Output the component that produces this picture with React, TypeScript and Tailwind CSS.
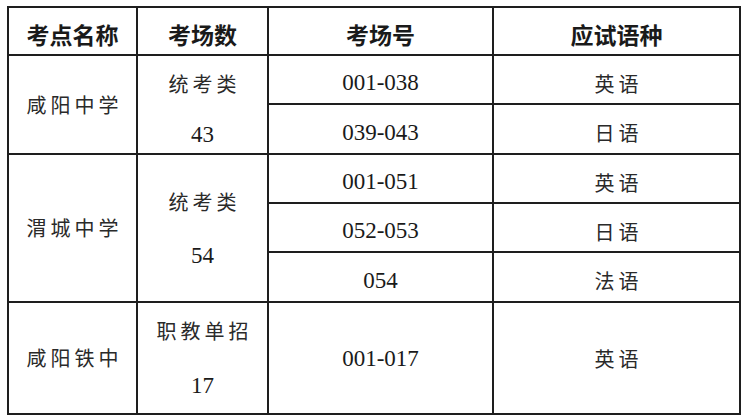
const cjk = "font-['Noto_Sans_CJK_SC',sans-serif]";
const num = "font-['Liberation_Serif','Noto_Sans_CJK_SC',serif]";

function Cell({ className = "pt-[8px]", children }: { className?: string; children?: React.ReactNode }) {
  return (
    <div className={`bg-white flex items-center justify-center text-[#1a1a1a] ${className}`}>
      {children}
    </div>
  );
}

const zh = `${cjk} text-[20px] tracking-[4px] pl-[4px] text-[#2a2a2a]`;
const digits = `${num} text-[23px]`;
const head = `${cjk} text-[23px] font-bold pt-[6px]`;

export default function App() {
  return (
    <div className="w-[742px] h-[417px] bg-white pl-[7px] pt-[6px]">
      <div className="grid w-[734px] grid-cols-[127px_129px_223px_245px] grid-rows-[46px_47px_48px_47px_47px_48px_110px] gap-[2px] bg-[#1e1e1e] p-[2px]">
        <Cell className={head}>考点名称</Cell>
        <Cell className={head}>考场数</Cell>
        <Cell className={head}>考场号</Cell>
        <Cell className={head}>应试语种</Cell>

        <Cell className="row-span-2"><span className={zh}>咸阳中学</span></Cell>
        <Cell className="row-span-2 flex-col leading-[51px] pt-[8px]">
          <span className={zh}>统考类</span>
          <span className={digits}>43</span>
        </Cell>
        <Cell><span className={digits}>001-038</span></Cell>
        <Cell><span className={zh}>英语</span></Cell>
        <Cell><span className={digits}>039-043</span></Cell>
        <Cell><span className={zh}>日语</span></Cell>

        <Cell className="row-span-3"><span className={zh}>渭城中学</span></Cell>
        <Cell className="row-span-3 flex-col leading-[54px] pt-[2px]">
          <span className={zh}>统考类</span>
          <span className={digits}>54</span>
        </Cell>
        <Cell><span className={digits}>001-051</span></Cell>
        <Cell><span className={zh}>英语</span></Cell>
        <Cell><span className={digits}>052-053</span></Cell>
        <Cell><span className={zh}>日语</span></Cell>
        <Cell><span className={digits}>054</span></Cell>
        <Cell><span className={zh}>法语</span></Cell>

        <Cell className=""><span className={zh}>咸阳铁中</span></Cell>
        <Cell className="flex-col leading-[55px]">
          <span className={zh}>职教单招</span>
          <span className={digits}>17</span>
        </Cell>
        <Cell className="pt-[2px]"><span className={digits}>001-017</span></Cell>
        <Cell className="pt-[2px]"><span className={zh}>英语</span></Cell>
      </div>
    </div>
  );
}
